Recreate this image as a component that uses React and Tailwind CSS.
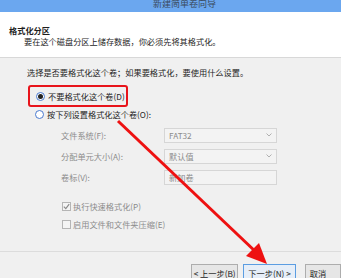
import React from 'react';

const font = { fontFamily: '"Noto Sans CJK SC", "Noto Sans", sans-serif' };

const Radio = ({ checked }) => (
    <span className="w-[9px] h-[9px] rounded-full border border-[#4a7bd0] bg-white flex items-center justify-center shrink-0">
        {checked && <span className="w-[5px] h-[5px] rounded-full bg-[#222]" />}
    </span>
);

const Check = ({ checked }) => (
    <span className="w-[9px] h-[9px] border border-[#b5b5b5] bg-[#f4f4f4] flex items-center justify-center shrink-0">
        {checked && (
            <svg width="7" height="7" viewBox="0 0 7 7">
                <path d="M0.8 3.6 L2.8 5.6 L6.2 1.2" stroke="#8a8a8a" strokeWidth="1.2" fill="none" />
            </svg>
        )}
    </span>
);

const Field = ({ label, value, select }) => (
    <div className="flex items-center h-[14px]">
        <span className="w-[103px] text-[#8c8c8c]">{label}</span>
        <div className="w-[113px] h-[15px] border border-[#d6d6d6] bg-[#f3f3f3] flex items-center pl-[4px] pr-[4px] text-[#8c8c8c]">
            <span className="flex-1">{value}</span>
            {select && (
                <svg width="6" height="4" viewBox="0 0 6 4">
                    <path d="M0.5 0.5 L3 3 L5.5 0.5" stroke="#b0b0b0" strokeWidth="1" fill="none" />
                </svg>
            )}
        </div>
    </div>
);

export default function App() {
    return (
        <div className="relative w-[341px] h-[278px] overflow-hidden bg-[#f0f0f0] text-[8.2px] leading-[11px] text-[#1e1e1e]" style={font}>
            {/* Title bar */}
            <div className="h-[12px] bg-[#6ba7ef] overflow-hidden">
                <div className="pl-[153px] -mt-[2px] text-[9px] leading-[12px] text-[#3a4a5c]">新建简单卷向导</div>
            </div>

            {/* Header */}
            <div className="h-[46px] bg-white border-b border-[#d8d8d8] pl-[9px] pt-[13px]">
                <div className="font-bold">格式化分区</div>
                <div className="pl-[15px]">要在这个磁盘分区上储存数据，你必须先将其格式化。</div>
            </div>

            {/* Body */}
            <div className="pl-[27px] pt-[9px] h-[194px] border-b border-[#dcdcdc]">
                <div>选择是否要格式化这个卷；如果要格式化，要使用什么设置。</div>

                <div className="mt-[7px] ml-[1px] w-[100px] h-[22px] border-2 border-[#e8141b] rounded-[3px] flex items-center gap-[3px] pl-[6px]">
                    <Radio checked />
                    <span>不要格式化这个卷(D)</span>
                </div>

                <div className="mt-[2px] ml-[8px] flex items-center gap-[3px]">
                    <Radio />
                    <span>按下列设置格式化这个卷(O):</span>
                </div>

                <div className="ml-[34px] mt-[8px] flex flex-col gap-[7px]">
                    <Field label="文件系统(F):" value="FAT32" select />
                    <Field label="分配单元大小(A):" value="默认值" select />
                    <Field label="卷标(V):" value="新加卷" />
                </div>

                <div className="ml-[35px] mt-[17px] flex flex-col gap-[7px] text-[#8c8c8c]">
                    <div className="flex items-center gap-[2px]">
                        <Check checked />
                        <span>执行快速格式化(P)</span>
                    </div>
                    <div className="flex items-center gap-[2px]">
                        <Check />
                        <span>启用文件和文件夹压缩(E)</span>
                    </div>
                </div>
            </div>

            {/* Buttons */}
            <div className="flex pl-[191px] pt-[12px] gap-[5px]">
                <div className="w-[53px] h-[18px] border border-[#adadad] bg-[#e6e6e6] pt-[3px] text-center">&lt; 上一步(B)</div>
                <div className="w-[59px] h-[18px] border border-[#5b9de2] bg-[#e6eef8] pt-[3px] text-center">下一步(N) &gt;</div>
                <div className="ml-[4px] w-[40px] h-[18px] border border-[#adadad] bg-[#e6e6e6] pt-[3px] pl-[4px]">取消</div>
            </div>

            {/* Red arrow overlay */}
            <svg className="absolute left-0 top-0 pointer-events-none" width="341" height="278" viewBox="0 0 341 278">
                <line x1="118" y1="121" x2="257" y2="253" stroke="#ee1111" strokeWidth="3" />
                <polygon points="267,264 246,256 259,243" fill="#ee1111" />
            </svg>
        </div>
    );
}
